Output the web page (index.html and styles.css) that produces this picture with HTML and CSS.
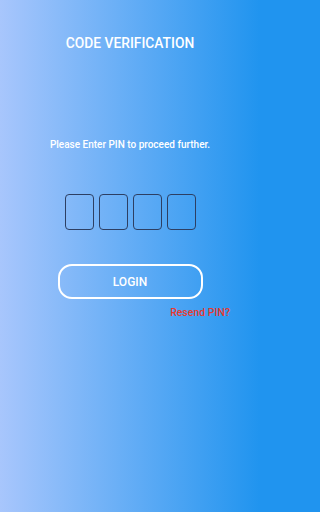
FILE: index.html
```html
<!DOCTYPE html>
<html>
<head>
<meta charset="utf-8">
<link rel="stylesheet" href="styles.css">
</head>
<body>
<div class="screen">
  <h1 class="title">CODE VERIFICATION</h1>
  <p class="subtitle">Please Enter PIN to proceed further.</p>
  <div class="pins">
    <div class="pin"></div>
    <div class="pin"></div>
    <div class="pin"></div>
    <div class="pin"></div>
  </div>
  <button class="login">LOGIN</button>
  <div class="resend-row"><span class="resend">Resend PIN?</span></div>
</div>
</body>
</html>
```
FILE: styles.css
```css
html, body {
  margin: 0;
  padding: 0;
}
html {
  background: #2094ef;
}
body {
  width: 260px;
  height: 512px;
  overflow: hidden;
  font-family: Roboto, "Liberation Sans", sans-serif;
}
.screen {
  width: 260px;
  height: 512px;
  background: linear-gradient(to right, #a8c6fc 0%, #2094ef 100%);
  display: flex;
  flex-direction: column;
  align-items: center;
  box-sizing: border-box;
  padding-top: 35px;
}
.title {
  margin: 0;
  color: #ffffff;
  font-size: 13.8px;
  font-weight: 500;
  line-height: 16px;
  letter-spacing: 0;
}
.subtitle {
  margin: 88px 0 0;
  color: #ffffff;
  font-size: 10px;
  font-weight: 500;
  line-height: 12px;
}
.pins {
  margin-top: 43px;
  display: flex;
  gap: 5px;
}
.pin {
  width: 27px;
  height: 34px;
  border: 1px solid #2d3f63;
  border-radius: 4px;
}
.login {
  margin-top: 34px;
  width: 145px;
  height: 35px;
  box-sizing: border-box;
  border: 2px solid #ffffff;
  border-radius: 14px;
  background: transparent;
  color: #ffffff;
  font-family: Roboto, "Liberation Sans", sans-serif;
  font-size: 12px;
  font-weight: 500;
  padding: 0;
}
.resend-row {
  align-self: stretch;
  display: flex;
  justify-content: flex-end;
  padding-right: 30px;
  margin-top: 8px;
}
.resend {
  color: #e8392f;
  font-size: 10.5px;
  font-weight: 500;
  line-height: 12px;
}
```
